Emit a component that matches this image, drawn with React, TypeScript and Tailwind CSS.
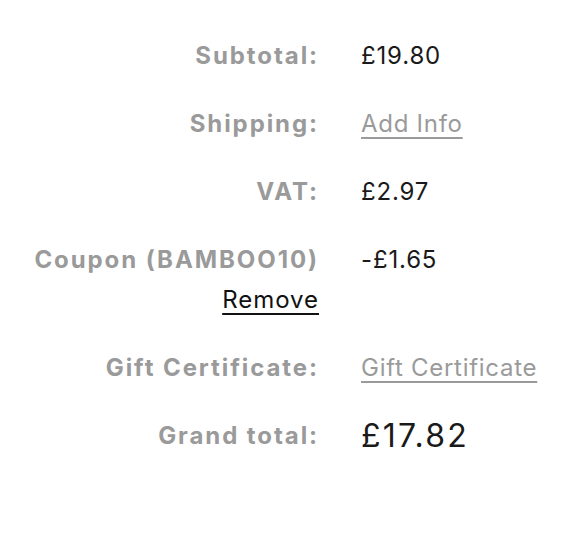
import React from "react";

const Row = ({ label, children, sub }: { label: string; children: React.ReactNode; sub?: React.ReactNode }) => (
  <div className="flex">
    <div className="w-[319px] shrink-0 flex flex-col items-end">
      <div className="h-10 leading-10 text-[24px] font-bold tracking-[0.08em] text-[#9a9a9a] whitespace-nowrap">{label}</div>
      {sub}
    </div>
    <div className="pl-[42px] h-10 flex items-center whitespace-nowrap">{children}</div>
  </div>
);

export default function App() {
  return (
    <div className="w-[570px] h-[534px] bg-white pt-[36px]" style={{ fontFamily: "Inter, 'Noto Sans', sans-serif" }}>
      <div className="flex flex-col gap-[28px]">
        <Row label="Subtotal:">
          <span className="text-[24px] tracking-[0.035em] text-[#1a1a1a]">£19.80</span>
        </Row>
        <Row label="Shipping:">
          <a className="text-[24px] tracking-[0.03em] text-[#9a9a9a] underline underline-offset-[5px] decoration-2">Add Info</a>
        </Row>
        <Row label="VAT:">
          <span className="text-[24px] tracking-[0.035em] text-[#1a1a1a]">£2.97</span>
        </Row>
        <Row
          label="Coupon (BAMBOO10)"
          sub={
            <a className="h-10 leading-10 text-[24px] tracking-[0.04em] text-[#111] underline underline-offset-[5px] decoration-2">Remove</a>
          }
        >
          <span className="text-[24px] tracking-[0.035em] text-[#1a1a1a]">-£1.65</span>
        </Row>
        <Row label="Gift Certificate:">
          <a className="text-[24px] tracking-[0.03em] text-[#9a9a9a] underline underline-offset-[5px] decoration-2">Gift Certificate</a>
        </Row>
        <Row label="Grand total:">
          <span className="text-[32px] tracking-[0.07em] text-[#1a1a1a]">£17.82</span>
        </Row>
      </div>
    </div>
  );
}
